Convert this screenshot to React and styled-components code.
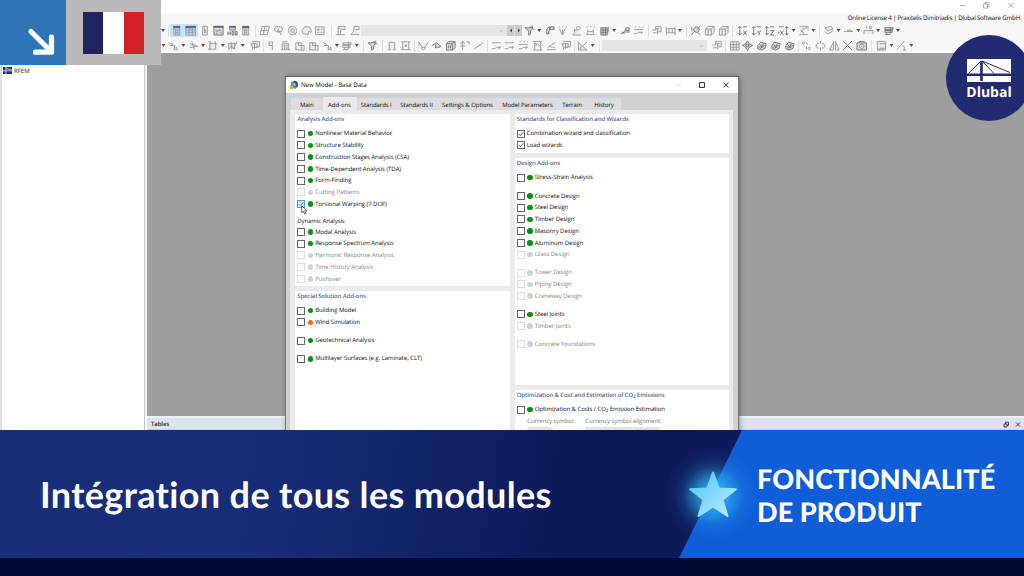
import React from "react";
import styled, { createGlobalStyle, css } from "styled-components";

const GlobalStyle = createGlobalStyle`
  * {
    box-sizing: border-box;
  }
  body {
    margin: 0;
    overflow: hidden;
    font-family: "Open Sans", "Noto Sans", sans-serif;
    text-rendering: geometricPrecision;
  }
`;

// toolbar glyphs, all on a 12x12 grid
const glyphs = {
  panel: "M3 1.500h6.500v9.500H3zM5 4v7M7.500 4v7M5 6h2.500M5 8.500h2.500",
  table: "M1 1.500h10.500v9.500H1zM1 5.500h10.500M1 8h10.500M4.500 3v8M8 3v8",
  doc: "M4 1.500h5v9.500H4zM6 3v6M7.500 5v4",
  wave: "M1 1.500h10v9.500H1zM3 6l2 1 1.500-2 2 1.500M3 9h2M8 8.500h1.500",
  res: "M3 1.500h6v4H3zM1 7v4M1 9h2.500M3.500 7v4M5.500 7h2v4h-2zM9 7h2v4H9z",
  plane: "M3.500 1.500h8l-2.500 9H1zM6.500 1.500L4.500 10.500M2.500 6h7",
  orbit: "M6 1.500a4.500 3 0 1 0 .1 0M5.500 4v4l1.500-1 2 4M9 6l1.500 2",
  target: "M6 1.500a4.500 4.500 0 1 0 .1 0M6 4a2 2 0 1 0 .1 0M7 8l3 3",
  lasso: "M1 6l3-4h5l2 3v3L8 7v3H4L2 9z",
  card: "M1.500 2h9.500v8.500H1.500zM3.500 4.500h2v1h-2zM7.500 4.500h2M3.500 8h2M7.500 8h2",
  support: "M3.500 1.500H11v3.500H6.500M3.500 1.500v9M1 10.500h10M6 5v5.500M3.500 4H6",
  support2: "M5.500 1.500h5.500V5H7M5.500 1.500v5L2 10.500h9",
  funnel: "M1 3h9L7 6.500V10L5 11V6.500zM6 3l4-2M8 2l3 3",
  flag: "M3 10V4l3-2v4l-2 4M7 2h4v3H7zM4 10l3-2",
  pins: "M1.500 2h1.500M5.500 2H7M9.500 2H11M2.500 4l3.500 7 3-7M6 10.500V5",
  column: "M4 4v4l-2 3h9M4 6l4-1M8 1.500a2 2 0 1 0 .1 0",
  dims: "M1.500 2H3M5.500 2H7M9.500 2H11M3 5v5.500M9 5v5.500M1 10.500h10M3 7h6",
  grid: "M2 3h7v8H2zM2 5.500h7M2 8h7M4.500 3v8M7 3v8M10 2v6",
  beam: "M1 9.500l4-2h6M5 7l2-4h3v3H6M2 7.500l3 2",
  dots: "M2 2h1.500M6 2h1.500M10 2h1M1 5h10M1 9.500h3l2-1.500h5M9 7v3",
  window: "M5 1.500h6v6H7.500M5 1.500v4H1.500M2 8.500h4M5 4h4M7 4v6",
  fence: "M1.500 2v9M11 2v9M1.500 4h9.500M1.500 8.500h9.500M4.500 4v4.500M8 4v4.500",
  zoom: "M7 2a3 3 0 1 0 .1 0M5 7l-3.500 4M8 5l3-4M8 8l3 2.500M2 2v5",
  cube: "M1.500 4.500h6.500V11H1.500zM1.500 4.500l3-3H11V8l-3 3M8 4.500l3-3M4.500 4.500V11",
  axisX: "M3 2v9M1 3.500L3 1.500l2 2M1 9l2 2 2-2M6.500 2H11M7 6l3.500 5M10.500 6L7 11",
  axisY: "M3 2v9M1 3.500L3 1.500l2 2M1 9l2 2 2-2M6.500 2H11M7 6l2 2.500L11 6M9 8.500V11",
  axisZ: "M3 2v9M1 3.500L3 1.500l2 2M1 9l2 2 2-2M6.500 2H11M7 6h4l-4 5h4",
  axisN: "M9.500 2v9M7.500 3.500l2-2 2 2M7.500 9l2 2 2-2M1 2h5M2.500 6L6 11M6 6l-3.500 5M0 8.500h1.500",
  edit: "M1.500 1.500H11V6M11 10.500H1.500M3 8l7-6M2 4.500l3 3 2 3M4 4h2",
  layers: "M2 3l7-1.500 2 3L5 6.500zM2 7l3 3 6-3.500",
  needle: "M1 7h10M5 5.500h3l2 1.500H5z",
  load: "M1 10V6h10v4M4 1.500V4M7 1.500h2V4H7z",
  stack: "M2 3h9v2H2zM2 6h8v2H2zM4 8v3M8 2v8M2 10.500h6",
  node: "M1.500 3l4 2 2.500 4M2 6h4M6 10.500h5M7 6v4M9.500 7v3",
  spike: "M2 4l6 2M4 1.500l3 9M2 8.500l9-2M6 4l4 3",
  square: "M3 3.500h6.500v6.500H3zM1 2h3v3M9 1.500v3h2.500M1 10h3",
  mesh: "M1 4h10M2 4v6l3-4 2 4 4-8M5 2v8M8 3v7",
  stamp: "M3 1.500h8.500v6H7M2 4h7v4H4zM4 8v3M6 4v6",
  pole: "M4.500 2h4M4.500 2v4h3M8 2v9",
  frame: "M2.500 10.500V4h7v6.500M5 5v5M7.500 5v5M1 10.500h10M2 2h6",
  frameB: "M2 10.500V3h6v7.500M4.500 6H11v5H4.500M1 10.500h4M5 3v3",
  arch: "M3.500 10.500V2.500h6v8M2 10.500h3M8 10.500h3",
  boxed: "M1 2h10.500M1 10.500h10.500M3 2v8.500M9.500 2v8.500M5.500 5.500h1.500v1.500H5.500z",
  catenary: "M1 2.500l3.500 5.500h3L11 2.500M3 8l3 3 3-3M1 2v4",
  shell: "M1 6l5-3 5 4-4 1.500-2-1.500M5 5v4",
  solid: "M1.500 4h6.500v7H1.500zM1.500 4l2.500-2.500h7V8.500L8 11M8 4l3-2.500M4 6v3M6 6v3",
  move: "M4 1.500v9.500M1.500 4L4 1.500 6.500 4M1 6.500h6M8 2h3v3",
  line: "M1.500 9.500l9-6",
  result: "M1 3h10M1 9.500h3l2-1.500h5M9 6.500V10",
  resultH: "M1 1.500h10.500M3 2v9M9.500 2v9M1 11h10.500M3 7l3-3 3.500 3.500M3 4h2",
  slope: "M1.500 8.500l9-6M1 10.500h10M4 7.500l6 .5",
  wedge: "M1.500 1.500v9.500H11M2 3l9 8M3 9.500L11 2M4 7v3",
  picture: "M1.500 2h9.500v9H1.500zM1.500 5h9.500M4.500 2v9M8 2v9M1.500 8h9.500",
  compass: "M6 1l2 3 3.500 2L8 8l-2 3.500L4 8 .5 6 4 4zM4.500 4.500h3v3h-3z",
  rock: "M2 6l3-3.500 6 1.500-1 5-4 2-4-1.500zM4 5l4 4M8 4l-3 6M3 8l7-2",
  percent: "M2.500 2.500a1 1 0 1 0 .1 0M5 2l2 3M9 8a1.300 1.300 0 1 0 .1 0M6 7v3",
  rotate: "M4.500 3.500C0 4 0 9 4.500 9M7.500 3.500c4.500.5 4.500 5.500 0 5.500M6 1v3.500M6 8v3.500",
  mirror: "M5 1.500v9.500H.8zM7 1.500v9.500h4.200z",
  cross: "M1 1l10 10M11 1L1 11",
  camera: "M1 3h10.500v8H1zM3 1.500h6.500M6.200 4.500a2.300 2.300 0 1 0 .1 0M6.200 6v1.500",
  sheet: "M1.500 1.500h9V11h-9zM4 4h6.500v5H4M2 10h7",
  ruler: "M1 10.500l8-9M7 6.500h2V11M7.500 11H11",
};

// title strips of the table and navigator toggles
const strips = { panel: "M2.500 1h7.500v2.500H2.500z", table: "M.500 1H12v2.500H.500z", wave: "M.500 1h11v2H.500z", res: "M2.500 1h7v2h-7z" };

// "v" is a menu arrow, "|" a divider, numbers nudge the next tool
const rowOne = [-0.5, "v", "|", -1, "panel*", "table*", "doc", "wave!", "res!", "panel", "|", "plane", "orbit", "target", "lasso", "card", 2, "|", "support", "support2", "combo:145.6", "nav", 0.5, "funnel!", "v", "flag!", "pins", "column", "dims", "grid!", "v", 1, "beam!", "dots", "|", -1.5, "window", "fence", "v", 1, "|", "zoom!", "cube", "cube", "|", "axisX!", "axisY!", "axisZ!", "axisN!", "v", "edit", "v", 1, "|", -0.5, "layers", "v", "needle", "v", "load", "v", "stack!", "v"];

const rowTwo = ["v", "node", "v", "spike", "v", "square", "v", "mesh", "v", 1.5, "stamp", "|", -2, "pole", 1, "frame", "frameB", "frameB", "node", "v", "stack", "v", 1, "|", "funnel!", "|", "arch", "boxed", "|", -1, "catenary", "shell!", "solid!", "move", "line", "|", -1, "result", "result", "dots", "resultH", "slope", "stamp", "|", -1, "wedge", "v", 1, "|", "combo:105.7", 2, "window", "|", -1, "picture", "compass!", "rock!", "rock!", "rock!", "|", -1.5, "percent", "rotate", "mirror", "cross!", "camera!", "|", 1, "sheet", "v", "ruler", "v"];

const tabs = [
  ["Main", 31.5],
  ["Add-ons", 34],
  ["Standards I", 39.5],
  ["Standards II", 41],
  ["Settings & Options", 61],
  ["Model Parameters", 59],
  ["Terrain", 30],
  ["History", 34],
];

const analysis = [
  ["Nonlinear Material Behavior", "green"],
  ["Structure Stability", "green"],
  ["Construction Stages Analysis (CSA)", "green"],
  ["Time-Dependent Analysis (TDA)", "green"],
  ["Form-Finding", "green"],
  ["Cutting Patterns", "off"],
  ["Torsional Warping (7 DOF)", "green", "hot"],
];

const dynamic = [
  ["Modal Analysis", "green"],
  ["Response Spectrum Analysis", "green"],
  ["Harmonic Response Analysis", "off"],
  ["Time History Analysis", "off"],
  ["Pushover", "off"],
];

const special = [
  ["Building Model", "green"],
  ["Wind Simulation", "orange"],
  null,
  ["Geotechnical Analysis", "green"],
  null,
  ["Multilayer Surfaces (e.g. Laminate, CLT)", "green"],
];

const wizards = [
  ["Combination wizard and classification", "none", "on"],
  ["Load wizards", "none", "on"],
];

const design = [
  ["Stress-Strain Analysis", "green"],
  null,
  ["Concrete Design", "green"],
  ["Steel Design", "green"],
  ["Timber Design", "green"],
  ["Masonry Design", "green"],
  ["Aluminum Design", "green"],
  ["Glass Design", "off"],
  null,
  ["Tower Design", "off"],
  ["Piping Design", "off"],
  ["Craneway Design", "off"],
  null,
  ["Steel Joints", "green"],
  ["Timber Joints", "off"],
  null,
  ["Concrete Foundations", "off"],
];

function Toolbar({ items }) {
  return (
    <ToolRow>
      {items.map((item, i) => {
        if (typeof item === "number") return <Nudge key={i} $by={item} />;
        if (item === "v") return <Arrow key={i} />;
        if (item === "|") return <Divider key={i} />;
        if (item === "nav") {
          return (
            <Nav key={i}>
              <svg width="15" height="11" viewBox="0 0 15 11">
                <path d="M5 3.500v4L3 5.500zM11 3.500v4l2-2z" fill="#444" />
                <path d="M7.500 0v11" stroke="#e2e2e2" />
              </svg>
            </Nav>
          );
        }
        if (item.startsWith("combo")) {
          return (
            <Combo key={i} $w={Number(item.split(":")[1])}>
              <svg width="5" height="4" viewBox="0 0 5 4">
                <path d="M.5 1l2 2 2-2" fill="none" stroke="#bbb" strokeWidth=".8" />
              </svg>
            </Combo>
          );
        }
        const name = item.replace(/[*!]/, "");
        return (
          <Tool key={i} $active={item.endsWith("*")}>
            <svg width="11" height="11" viewBox="0 0 12 12">
              <path
                d={glyphs[name]}
                fill={item.endsWith("!") ? "rgba(90,90,90,.2)" : "rgba(120,120,120,.08)"}
                stroke={item.endsWith("!") ? "#777" : "#999"}
                strokeWidth="1"
              />
              {strips[name] && <path d={strips[name]} fill="#62628c" />}
            </svg>
          </Tool>
        );
      })}
    </ToolRow>
  );
}

function Option({ label, status, state }) {
  return (
    <OptionRow $off={status === "off"}>
      <Check $off={status === "off"} $hot={state === "hot"}>
        {state && (
          <svg width="6" height="6" viewBox="0 0 6 6">
            <path d="M.7 3l1.600 1.700L5.400 1.200" fill="none" stroke={state === "hot" ? "#2c86cc" : "#333"} strokeWidth=".8" />
          </svg>
        )}
      </Check>
      {status !== "none" && <Dot $status={status} />}
      <Label>{label}</Label>
    </OptionRow>
  );
}

function Options({ items }) {
  return items.map((o, i) =>
    o ? <Option key={i} label={o[0]} status={o[1]} state={o[2]} /> : <OptionGap key={i} />
  );
}

function Co2() {
  return (
    <>
      CO<Sub>2</Sub>
    </>
  );
}

function BaseDataDialog() {
  return (
    <Dialog>
      <DialogTitle>
        <svg width="10" height="10" viewBox="0 0 10 10">
          <path d="M2 2l3-1.500 4 1.500v5L6 9 2 7z" fill="#6f8fb8" />
          <path d="M5 1a3.500 3.500 0 0 1 4 4l-2 2-3-2z" fill="#31568c" />
          <path d="M1 5l3 1v3.500L1 9z" fill="#d9b13c" />
          <path d="M4.500 3l2 1v2l-2-1z" fill="#e4edf7" />
        </svg>
        <DialogName>New Model - Base Data</DialogName>
        <svg width="61" height="10" viewBox="0 0 61 10" fill="none">
          <path d="M1 5h6" stroke="#ddd" />
          <path d="M25.500 2.500h5v5h-5z" stroke="#333" />
          <path d="M49.500 2.500l5 5M54.500 2.500l-5 5" stroke="#333" strokeWidth=".9" />
        </svg>
      </DialogTitle>
      <Tabs>
        {tabs.map(([name, w]) => (
          <Tab key={name} $w={w} $active={name === "Add-ons"}>
            {name}
          </Tab>
        ))}
      </Tabs>
      <DialogBody>
        <Column>
          <Group $h={172}>
            <GroupTitle>Analysis Add-ons</GroupTitle>
            <Options items={analysis} />
            <SubTitle>Dynamic Analysis</SubTitle>
            <Options items={dynamic} />
          </Group>
          <Group $h={150}>
            <GroupTitle>Special Solution Add-ons</GroupTitle>
            <Options items={special} />
          </Group>
        </Column>
        <Column>
          <Group $h={39}>
            <GroupTitle>Standards for Classification and Wizards</GroupTitle>
            <Options items={wizards} />
          </Group>
          <Group $h={227}>
            <GroupTitle>Design Add-ons</GroupTitle>
            <Options items={design} />
          </Group>
          <Group $h={60}>
            <GroupTitle>
              Optimization &amp; Cost and Estimation of <Co2 /> Emissions
            </GroupTitle>
            <Option
              status="green"
              label={
                <>
                  Optimization &amp; Costs / <Co2 /> Emission Estimation
                </>
              }
            />
            <Fields>
              <Field $w={58} $box={26}>
                Currency symbol
              </Field>
              <Field $w={80} $box={75}>
                Currency symbol alignment
              </Field>
            </Fields>
          </Group>
        </Column>
      </DialogBody>
      <Cursor width="7" height="10" viewBox="0 0 7 10">
        <path d="M.7.7v7l1.700-1.400 1.200 2.700 1.300-.6-1.200-2.600h2.100z" fill="#fff" stroke="#222" strokeWidth=".7" />
      </Cursor>
    </Dialog>
  );
}

function App() {
  return (
    <Page>
      <GlobalStyle />
      <Screen>
        <TitleBar>
          <svg width="60" height="10" viewBox="0 0 60 10" fill="none" stroke="#999" strokeWidth=".8">
            <path d="M2 5.500h5M25.500 4h4v4h-4zM27 4V2.500h4v4h-1.500M50.500 3l5 5M55.500 3l-5 5" />
          </svg>
        </TitleBar>
        <License>Online License 4 | Praxitelis Dimitriadis | Dlubal Software GmbH</License>
        <Toolbar items={rowOne} />
        <Toolbar items={rowTwo} />
        <Main>
          <Tree>
            <TreeItem>
              <svg width="9" height="7" viewBox="0 0 9 7">
                <path d="M0 0h9v7H0z" fill="#29306f" />
                <path d="M0 3.800h9M3 0v7M3.500 1.500L9 3" stroke="#fff" strokeWidth=".7" />
              </svg>
              RFEM
            </TreeItem>
          </Tree>
          <Workspace>
            <TablesBar>
              <span>Tables</span>
              <svg width="18" height="7" viewBox="0 0 18 7" fill="none" stroke="#333" strokeWidth=".9">
                <path d="M1 3h3v3H1zM2.500 3V1.200h3v3H4M13 1.500l4 4M17 1.500l-4 4" />
              </svg>
            </TablesBar>
          </Workspace>
        </Main>
        <BaseDataDialog />
        <Badges>
          <ArrowBadge>
            <svg width="30" height="30" viewBox="0 0 30 30" fill="none" stroke="#fff" strokeWidth="5.200" strokeLinecap="round" strokeLinejoin="round">
              <path d="M5 4.500l20.500 20.500M25.500 10v15.200H9.500" />
            </svg>
          </ArrowBadge>
          <FlagBadge>
            <Flag />
          </FlagBadge>
        </Badges>
        <Logo>
          <svg width="44" height="23" viewBox="0 0 44 23">
            <path d="M0 0h44v14.500H0zM0 17h44v6H0z" fill="#fff" />
            <path d="M14.500 2v20" stroke="#222a72" strokeWidth="2.600" />
            <path d="M14 2L1.500 14.500M15 2L27 14.500M15 2L43 13.500" stroke="#222a72" strokeWidth="1" />
          </svg>
          <span>Dlubal</span>
        </Logo>
      </Screen>
      <Banner>
        <Headline>Intégration de tous les modules</Headline>
        <Category>
          <CategoryText>
            FONCTIONNALITÉ
            <br />
            DE PRODUIT
          </CategoryText>
        </Category>
        <Star>
          <svg width="52" height="52" viewBox="0 0 52 52">
            <defs>
              <linearGradient id="star" x1="0" y1="0" x2="1" y2="1">
                <stop offset=".2" stopColor="#62cbff" />
                <stop offset=".9" stopColor="#b5eaff" />
              </linearGradient>
            </defs>
            <path
              d="M26 3.500l5.800 16 17 .7-13.300 10.600 5 16.200L26 37.500 11.500 47l5-16.200L3.200 20.200l17-.7z"
              fill="url(#star)"
              stroke="url(#star)"
              strokeWidth="2"
              strokeLinejoin="round"
            />
          </svg>
        </Star>
      </Banner>
      <Footer />
    </Page>
  );
}

export default App;

const Page = styled.div`
  width: 1024px;
  height: 576px;
  display: flex;
  flex-direction: column;
  overflow: hidden;
`;

const Screen = styled.div`
  position: relative;
  flex: 0 0 430px;
  display: flex;
  flex-direction: column;
  overflow: hidden;
  background: #f7f7f7;
`;

const TitleBar = styled.div`
  flex: 0 0 13px;
  display: flex;
  justify-content: flex-end;
  padding-right: 6px;
  background: #fff;
`;

const License = styled.div`
  flex: 0 0 10px;
  padding-right: 4px;
  text-align: right;
  font-size: 6.2px;
  line-height: 9px;
  letter-spacing: -0.21px;
  color: #111;
  white-space: nowrap;
`;

const ToolRow = styled.div`
  flex: 0 0 15px;
  display: flex;
  align-items: center;
  padding-left: 160.500px;
`;

const Tool = styled.div`
  flex: 0 0 13.8px;
  height: 13px;
  display: flex;
  align-items: center;
  justify-content: center;
  background: ${(p) => (p.$active ? "#c8e2f6" : "none")};
`;

const Nudge = styled.div`
  flex: none;
  margin-left: ${(p) => p.$by}px;
`;

const Arrow = styled.div`
  flex: 0 0 6px;
  height: 3px;
  background: #555;
  clip-path: polygon(1px 0, 5px 0, 3px 100%);
`;

const Divider = styled.div`
  flex: none;
  width: 1px;
  height: 12px;
  margin: 0 2px;
  background: #dedede;
`;

const Combo = styled.div`
  flex: 0 0 ${(p) => p.$w}px;
  height: 11px;
  display: flex;
  align-items: center;
  justify-content: flex-end;
  padding-right: 3px;
  background: #e6e6e6;
`;

const Nav = styled.div`
  flex: 0 0 15px;
  height: 11px;
  display: flex;
  background: #cbcbcb;
`;

const Main = styled.div`
  flex: 1;
  display: flex;
`;

const Tree = styled.div`
  flex: 0 0 145px;
  padding: 14px 0 0 1px;
  background: #fff;
  border-left: 2px solid #e0e0e4;
  border-right: 1px solid #c4c4c4;
`;

const TreeItem = styled.div`
  display: flex;
  align-items: center;
  gap: 2px;
  height: 7px;
  font-size: 6px;
  color: #222;
`;

const Workspace = styled.div`
  flex: 1;
  display: flex;
  flex-direction: column;
  justify-content: flex-end;
  margin-left: 2px;
  background: #9e9e9e;
`;

const TablesBar = styled.div`
  flex: 0 0 14px;
  display: flex;
  justify-content: space-between;
  align-items: center;
  padding: 1px 3px 0 4px;
  border-top: 2px solid #eef2f6;
  border-bottom: 1px solid #c9d3de;
  background: #dae5f1;
  font-size: 6px;
  font-weight: 600;
  letter-spacing: -0.1px;
  color: #222;
`;

const Dialog = styled.div`
  position: absolute;
  left: 285px;
  top: 76px;
  width: 454px;
  height: 380px;
  display: flex;
  flex-direction: column;
  border: 1px solid #777;
  border-top-color: #6a6a6a;
  background: #d0d1d5;
  box-shadow: 1px 0 5px rgba(0, 0, 0, 0.35);
  font-size: 6px;
  letter-spacing: -0.06px;
  color: #0c0c0c;
  white-space: nowrap;
`;

const DialogTitle = styled.div`
  flex: 0 0 16px;
  display: flex;
  align-items: center;
  padding: 0 3px 1px;
  background: #fff;
`;

const DialogName = styled.span`
  flex: 1;
  margin-left: 2px;
  font-size: 6.2px;
`;

const Tabs = styled.div`
  flex: 0 0 17px;
  display: flex;
  align-items: flex-end;
  padding-left: 5px;
`;

const Tab = styled.div`
  flex: 0 0 ${(p) => p.$w}px;
  height: ${(p) => (p.$active ? 13 : 12)}px;
  line-height: ${(p) => (p.$active ? 16 : 14)}px;
  text-align: center;
  background: ${(p) => (p.$active ? "#ebebec" : "#dcdcde")};
`;

const DialogBody = styled.div`
  flex: 1;
  display: flex;
  gap: 5px;
  margin: 0 5px 0 4px;
  padding: 4px 4px 0 5px;
  background: #ebebec;
  overflow: hidden;
`;

const Column = styled.div`
  flex: 0 0 214.500px;
  display: flex;
  flex-direction: column;
  gap: 5px;
`;

const Group = styled.div`
  flex: 0 0 ${(p) => p.$h}px;
  padding: 0 2.200px;
  background: #fff;
`;

const GroupTitle = styled.div`
  height: 13.800px;
  line-height: 10px;
  font-weight: 600;
  letter-spacing: -0.11px;
  color: #5c6690;
`;

const SubTitle = styled.div`
  height: 16px;
  padding-top: 5px;
  line-height: 12px;
`;

const OptionRow = styled.div`
  display: flex;
  align-items: center;
  height: 11.750px;
  line-height: 11.750px;
  color: ${(p) => (p.$off ? "#858585" : "#0c0c0c")};
`;

const Label = styled.span`
  padding-top: 1.300px;
`;

const OptionGap = styled.div`
  height: 6.400px;
`;

const Check = styled.div`
  flex: 0 0 8px;
  height: 8px;
  display: flex;
  align-items: center;
  justify-content: center;
  margin-right: 2px;
  border: 1px solid ${(p) => (p.$off ? "#dcdcdc" : "#666")};
  ${(p) =>
    p.$hot &&
    css`
      border-color: #4a9ad8;
      background: #dceefb;
    `}
`;

const dotColors = { green: "#0b8f14", orange: "#f7650f", off: "#d2d2d2" };

const Dot = styled.div`
  flex: 0 0 5.600px;
  height: 5.600px;
  margin: 0 2px 0 0.4px;
  border-radius: 50%;
  background: ${(p) => dotColors[p.$status]};
`;

const Sub = styled.span`
  font-size: 0.75em;
  position: relative;
  top: 1px;
`;

const Fields = styled.div`
  display: flex;
  padding-left: 10.500px;
`;

const Field = styled.div`
  flex: 0 0 ${(p) => p.$w}px;
  line-height: 11px;
  color: #777;

  &::after {
    content: "";
    display: block;
    width: ${(p) => p.$box}px;
    height: 8px;
    background: #e4e4e4;
  }
`;

const Cursor = styled.svg`
  position: absolute;
  left: 15px;
  top: 128px;
`;

const Badges = styled.div`
  position: absolute;
  left: 0;
  top: 0;
  display: flex;
`;

const ArrowBadge = styled.div`
  width: 66px;
  height: 65px;
  padding: 27px 0 0 26px;
  background: #2f75b5;
`;

const FlagBadge = styled.div`
  width: 95px;
  height: 65px;
  padding: 12px 17px;
  background: #bababa;
`;

const Flag = styled.div`
  width: 61px;
  height: 41.500px;
  background: linear-gradient(90deg, #23235f 33.3%, #fff 33.3% 66.6%, #d42027 66.6%);
`;

const Logo = styled.div`
  position: absolute;
  left: 946px;
  top: 35px;
  width: 86px;
  height: 86px;
  display: flex;
  flex-direction: column;
  align-items: center;
  padding-top: 24px;
  border-radius: 50%;
  background: #222a72;
  color: #fff;
  font-size: 14px;
  font-weight: 700;
  line-height: 21px;
`;

const Banner = styled.div`
  position: relative;
  flex: 0 0 128px;
  display: flex;
  align-items: stretch;
  overflow: hidden;
  background: linear-gradient(100deg, #182e78 0%, #172c76 28%, #0b1857 58%, #0d1a5c 75%);
  font-family: Lato, sans-serif;
  color: #fff;
  white-space: nowrap;
`;

const Headline = styled.div`
  flex: 0 0 679px;
  padding: 1px 0 0 40px;
  font-size: 36px;
  font-weight: 700;
  line-height: 127px;
  letter-spacing: 0.35px;
`;

const Category = styled.div`
  flex: 1;
  padding: 32px 0 0 78px;
  background: #0f5dd7;
  clip-path: polygon(63px 0, 100% 0, 100% 100%, 0 100%);
`;

const CategoryText = styled.div`
  font-size: 27px;
  font-weight: 900;
  line-height: 33px;
  letter-spacing: 0.1px;
`;

const Star = styled.div`
  position: absolute;
  left: 663px;
  top: 15px;
  width: 100px;
  height: 100px;
  display: flex;
  align-items: center;
  justify-content: center;
  background: radial-gradient(
    circle,
    rgba(60, 190, 245, 0.85) 10%,
    rgba(50, 180, 240, 0.6) 25%,
    rgba(50, 170, 240, 0.2) 42%,
    rgba(50, 170, 240, 0.06) 55%,
    rgba(50, 170, 240, 0) 68%
  );
`;

const Footer = styled.div`
  flex: 1;
  background: #020a33;
`;
